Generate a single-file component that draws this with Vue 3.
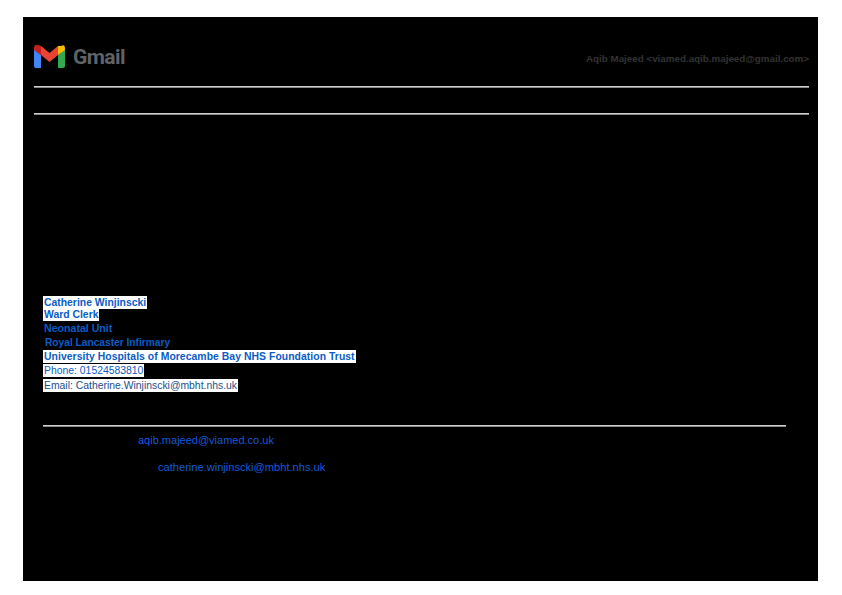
<script setup>
const sig = [
  { text: 'Catherine Winjinscki', kind: 'bold white-bg', h: 12 },
  { text: 'Ward Clerk', kind: 'bold white-bg', h: 12 },
  { text: 'Neonatal Unit', kind: 'bold neonatal', h: 16 },
  { text: 'Royal Lancaster Infirmary', kind: 'bold royal', h: 13 },
  { text: 'University Hospitals of Morecambe Bay NHS Foundation Trust', kind: 'bold white-bg wide', h: 14 },
  { text: 'Phone: 01524583810', kind: 'white-bg', h: 14 },
  { text: 'Email: Catherine.Winjinscki@mbht.nhs.uk', kind: 'white-bg dark', h: 16 }
]
</script>

<template>
  <div class="sheet">
    <header class="head">
      <div class="brand">
        <svg class="logo" width="31" height="24" viewBox="0 0 31 24" aria-hidden="true">
          <path d="M0 4 V21 Q0 23 2 23 H7 V10 Z" fill="#4285f4" />
          <path d="M24 10 V23 H29 Q31 23 31 21 V4 Z" fill="#34a853" />
          <path d="M24 1 V10 L31 5 V3 Q31 -1 27 1 Z" fill="#fbbc04" />
          <path d="M7 1 V10 L15.5 17 L24 10 V1 L15.5 8 Z" fill="#ea4335" />
          <path d="M0 5 L7 10 V1 L4 0 Q0 -1 0 3 Z" fill="#c5221f" />
        </svg>
        <span class="word">Gmail</span>
      </div>
      <div class="account">Aqib Majeed &lt;viamed.aqib.majeed@gmail.com&gt;</div>
    </header>
    <div class="rule first"></div>
    <div class="rule second"></div>

    <section class="signature">
      <div v-for="line in sig" :key="line.text" class="row" :style="{ height: line.h + 'px' }">
        <span class="line" :class="line.kind">{{ line.text }}</span>
      </div>
    </section>

    <div class="rule third"></div>
    <div class="mail one"><a>aqib.majeed@viamed.co.uk</a></div>
    <div class="mail two"><a>catherine.winjinscki@mbht.nhs.uk</a></div>
  </div>
</template>

<style>
html, body { margin: 0; background: #fff; }
</style>

<style scoped>
.sheet {
  box-sizing: border-box;
  width: 795px;
  height: 564px;
  margin: 17px 0 0 23px;
  background: #000;
  padding: 27px 9px 0 11px;
  font-family: "Liberation Sans", Arial, sans-serif;
  overflow: hidden;
}
.head {
  display: flex;
  justify-content: space-between;
  align-items: center;
  height: 25px;
}
.brand { display: flex; align-items: center; gap: 8px; }
.logo { display: block; }
.word {
  font-family: "Roboto", "Liberation Sans", sans-serif;
  font-size: 21px;
  line-height: 24px;
  font-weight: 700;
  letter-spacing: -0.6px;
  color: #5f6368;
}
.account {
  font-size: 9.8px;
  font-weight: 700;
  color: #333;
  margin-top: 4px;
}
.rule { height: 1px; background: #cfcfcf; border-bottom: 1px solid #888; }
.first { margin-top: 17px; }
.second { margin-top: 25px; }
.signature {
  margin: 181px 0 0 9px;
  display: flex;
  flex-direction: column;
}
.row { display: flex; align-items: center; }
.line {
  font-size: 10.4px;
  line-height: 13px;
  color: #0b5cc4;
  white-space: nowrap;
  padding: 0 1px;
}
.bold { font-weight: 700; }
.royal { margin-left: 1px; font-size: 10.2px; }
.neonatal { font-size: 10.6px; }
.wide { letter-spacing: 0.05px; }
.white-bg { background: #fff; }
.dark { color: #1d4f8e; }
.third { margin: 32px 23px 0 9px; }
.mail {
  font-size: 11px;
  line-height: 13px;
  color: #1758dc;
  white-space: nowrap;
}
.one { margin: 7px 0 0 104px; }
.two { margin: 14px 0 0 124px; font-size: 11.1px; }
</style>
